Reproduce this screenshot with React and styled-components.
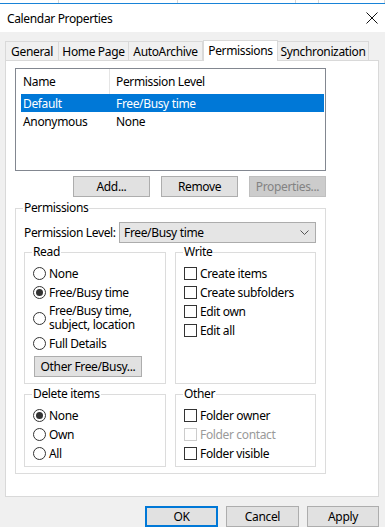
import React from 'react'
import styled, { createGlobalStyle } from 'styled-components'

const Global = createGlobalStyle`
  html, body {
    margin: 0;
    padding: 0;
    background: #f0f0f0;
  }
  body {
    font-family: "Noto Sans", "Liberation Sans", sans-serif;
    font-size: 12px;
    letter-spacing: -0.35px;
    color: #000;
  }
`

const Window = styled.div`
  width: 385px;
  height: 527px;
  overflow: hidden;
  background: #f0f0f0;
  display: flex;
  flex-direction: column;
`

const BehindStrip = styled.div`
  height: 3px;
  background: #fff;
  display: flex;
`

const BehindCell = styled.div`
  width: ${p => p.w}px;
  flex: ${p => (p.w ? 'none' : 1)};
  border-right: 1px solid #d6d6d6;
`

const TitleBar = styled.div`
  height: 29px;
  border-top: 1px solid #1883d7;
  background: #fff;
  display: flex;
  align-items: center;
  justify-content: space-between;
  padding: 0 7px;
`

const Title = styled.span`
  font-size: 12px;
  padding-top: 1px;
`

const Body = styled.div`
  padding: 7px 6px 0 5px;
`

const TabRow = styled.div`
  display: flex;
  align-items: flex-end;
  height: 21px;
`

const Tab = styled.div`
  width: ${p => p.w}px;
  height: ${p => (p.active ? 21 : 19)}px;
  box-sizing: border-box;
  border: 1px solid #d9d9d9;
  border-bottom: none;
  border-left: ${p => (p.first || p.active ? '1px solid #d9d9d9' : 'none')};
  background: ${p => (p.active ? '#fff' : '#f0f0f0')};
  display: flex;
  align-items: center;
  justify-content: center;
  white-space: nowrap;
  padding-bottom: ${p => (p.active ? 2 : 0)}px;
  margin-bottom: ${p => (p.active ? -1 : 0)}px;
  position: relative;
  z-index: ${p => (p.active ? 1 : 0)};
`

const Panel = styled.div`
  height: 437px;
  box-sizing: border-box;
  background: #fff;
  border: 1px solid #d9d9d9;
  padding: 7px 0 0 9px;
`

const ListBox = styled.div`
  width: 311px;
  height: 103px;
  box-sizing: border-box;
  border: 1px solid #828790;
  background: #fff;
`

const ListHeader = styled.div`
  display: grid;
  grid-template-columns: 94px 1fr;
  height: 25px;
`

const HeaderCell = styled.div`
  display: flex;
  align-items: center;
  padding-left: ${p => p.pad}px;
  border-right: ${p => (p.divider ? '1px solid #e5e5e5' : 'none')};
`

const ListRow = styled.div`
  display: grid;
  grid-template-columns: 94px 1fr;
  height: 18px;
  align-items: center;
  margin: 0 1px 0 5px;
  background: ${p => (p.selected ? '#0078d7' : 'transparent')};
  color: ${p => (p.selected ? '#fff' : '#000')};
`

const RowCell = styled.span`
  padding-left: ${p => p.pad}px;
`

const ButtonRow = styled.div`
  width: 311px;
  display: flex;
  justify-content: flex-end;
  gap: 11px;
  margin-top: 5px;
`

const Button = styled.button`
  width: ${p => p.w || 77}px;
  height: 21px;
  box-sizing: border-box;
  font-family: inherit;
  font-size: 12px;
  letter-spacing: inherit;
  white-space: nowrap;
  padding: 0;
  background: ${p => (p.disabled ? '#cccccc' : '#e1e1e1')};
  color: ${p => (p.disabled ? '#838383' : '#000')};
  border: ${p => (p.primary ? '2px solid #0078d7' : p.disabled ? '1px solid #bfbfbf' : '1px solid #adadad')};
  border-radius: 0;
`

const Group = styled.fieldset`
  margin: 0;
  border: 1px solid #dcdcdc;
  padding: ${p => p.pad || '4px 8px 3px 8px'};
  min-width: 0;
  box-sizing: border-box;
  width: ${p => (p.w ? `${p.w}px` : 'auto')};
`

const Legend = styled.legend`
  padding: 0 1px;
  margin-left: -1px;
  line-height: 16px;
`

const OuterGroup = styled(Group)`
  margin-top: 3px;
  padding: 6px 9px 6px 8px;
`

const LevelRow = styled.div`
  display: flex;
  align-items: center;
  height: 21px;
  margin-bottom: 1px;
`

const LevelLabel = styled.span`
  width: 95px;
  flex: none;
  white-space: nowrap;
`

const Dropdown = styled.div`
  flex: 1;
  height: 21px;
  box-sizing: border-box;
  background: #e5e5e5;
  border: 1px solid #acacac;
  display: flex;
  align-items: center;
  justify-content: space-between;
  padding: 0 6px 0 4px;
`

const GroupGrid = styled.div`
  display: grid;
  grid-template-columns: 142px 141px;
  column-gap: 9px;
  row-gap: 2px;
`

const Option = styled.div`
  display: flex;
  align-items: center;
  gap: 3px;
  min-height: 19px;
  white-space: nowrap;
  color: ${p => (p.disabled ? '#9a9a9a' : '#000')};
`

const OptionText = styled.span`
  line-height: 14px;
`

const Radio = styled.span`
  width: 13px;
  height: 13px;
  flex: none;
  box-sizing: border-box;
  border: 1px solid #333;
  border-radius: 50%;
  background: #fff;
  display: flex;
  align-items: center;
  justify-content: center;
  &::after {
    content: '';
    width: 7px;
    height: 7px;
    border-radius: 50%;
    background: ${p => (p.checked ? '#333' : 'transparent')};
  }
`

const Check = styled.span`
  width: 13px;
  height: 13px;
  flex: none;
  box-sizing: border-box;
  border: 1px solid ${p => (p.disabled ? '#cccccc' : '#333')};
  background: #fff;
`

const TallOption = styled(Option)`
  min-height: 32px;
`

const OtherButton = styled(Button)`
  margin: 3px 0 0 1px;
  display: block;
`

const Footer = styled.div`
  display: flex;
  justify-content: flex-end;
  gap: 8px;
  padding: 9px 0 0;
`

function CloseIcon() {
  return (
    <svg width="12" height="12" viewBox="0 0 12 12">
      <path d="M0.5 0.5 L11.5 11.5 M11.5 0.5 L0.5 11.5" stroke="#111" strokeWidth="1" fill="none" />
    </svg>
  )
}

function Chevron() {
  return (
    <svg width="9" height="5" viewBox="0 0 9 5">
      <path d="M0.5 0.5 L4.5 4.5 L8.5 0.5" stroke="#555" strokeWidth="1" fill="none" />
    </svg>
  )
}

const RadioOption = ({ checked, children }) => (
  <Option>
    <Radio checked={checked} />
    <OptionText>{children}</OptionText>
  </Option>
)

const CheckOption = ({ disabled, children }) => (
  <Option disabled={disabled}>
    <Check disabled={disabled} />
    <OptionText>{children}</OptionText>
  </Option>
)

const tabs = [
  { label: 'General', w: 54 },
  { label: 'Home Page', w: 70 },
  { label: 'AutoArchive', w: 74 },
  { label: 'Permissions', w: 75, active: true },
  { label: 'Synchronization', w: 91 },
]

export default function App() {
  return (
    <Window>
      <Global />
      <BehindStrip>
        <BehindCell w={58} />
        <BehindCell w={118} />
        <BehindCell w={117} />
        <BehindCell w={22} />
        <BehindCell />
      </BehindStrip>
      <TitleBar>
        <Title>Calendar Properties</Title>
        <CloseIcon />
      </TitleBar>
      <Body>
        <TabRow>
          {tabs.map((t, i) => (
            <Tab key={t.label} w={t.w} active={t.active} first={i === 0}>
              {t.label}
            </Tab>
          ))}
        </TabRow>
        <Panel>
          <ListBox>
            <ListHeader>
              <HeaderCell pad={7} divider>Name</HeaderCell>
              <HeaderCell pad={6}>Permission Level</HeaderCell>
            </ListHeader>
            <ListRow selected>
              <RowCell pad={2}>Default</RowCell>
              <RowCell pad={1}>Free/Busy time</RowCell>
            </ListRow>
            <ListRow>
              <RowCell pad={2}>Anonymous</RowCell>
              <RowCell pad={1}>None</RowCell>
            </ListRow>
          </ListBox>
          <ButtonRow>
            <Button>Add...</Button>
            <Button>Remove</Button>
            <Button disabled>Properties...</Button>
          </ButtonRow>
          <OuterGroup w={311}>
            <Legend>Permissions</Legend>
            <LevelRow>
              <LevelLabel>Permission Level:</LevelLabel>
              <Dropdown>
                <span>Free/Busy time</span>
                <Chevron />
              </Dropdown>
            </LevelRow>
            <GroupGrid>
              <Group pad="4px 8px 6px 8px">
                <Legend>Read</Legend>
                <RadioOption>None</RadioOption>
                <RadioOption checked>Free/Busy time</RadioOption>
                <TallOption>
                  <Radio />
                  <OptionText>Free/Busy time,<br />subject, location</OptionText>
                </TallOption>
                <RadioOption>Full Details</RadioOption>
                <OtherButton w={108}>Other Free/Busy...</OtherButton>
              </Group>
              <Group>
                <Legend>Write</Legend>
                <CheckOption>Create items</CheckOption>
                <CheckOption>Create subfolders</CheckOption>
                <CheckOption>Edit own</CheckOption>
                <CheckOption>Edit all</CheckOption>
              </Group>
              <Group>
                <Legend>Delete items</Legend>
                <RadioOption checked>None</RadioOption>
                <RadioOption>Own</RadioOption>
                <RadioOption>All</RadioOption>
              </Group>
              <Group>
                <Legend>Other</Legend>
                <CheckOption>Folder owner</CheckOption>
                <CheckOption disabled>Folder contact</CheckOption>
                <CheckOption>Folder visible</CheckOption>
              </Group>
            </GroupGrid>
          </OuterGroup>
        </Panel>
        <Footer>
          <Button primary w={73}>OK</Button>
          <Button w={73}>Cancel</Button>
          <Button w={72}>Apply</Button>
        </Footer>
      </Body>
    </Window>
  )
}
